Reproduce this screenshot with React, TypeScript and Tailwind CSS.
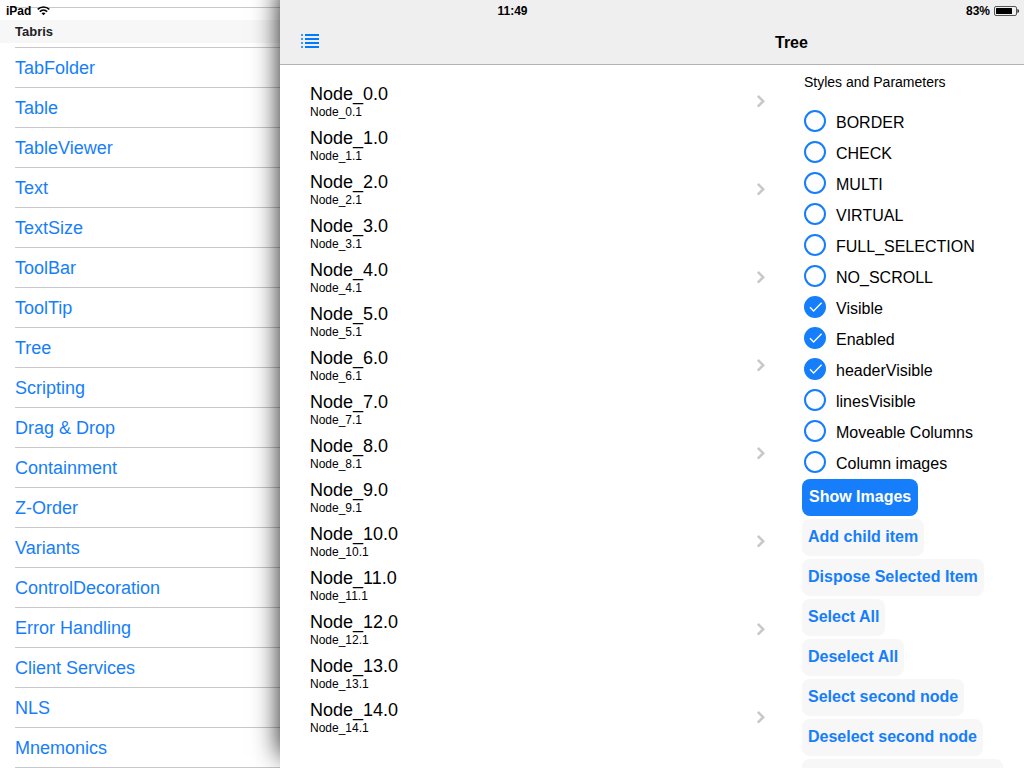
import React, { useState } from 'react';

const pages = [
  'TabFolder', 'Table', 'TableViewer', 'Text', 'TextSize', 'ToolBar', 'ToolTip', 'Tree', 'Scripting',
  'Drag & Drop', 'Containment', 'Z-Order', 'Variants', 'ControlDecoration', 'Error Handling',
  'Client Services', 'NLS', 'Mnemonics',
];

const initialOptions = [
  { label: 'BORDER', on: false },
  { label: 'CHECK', on: false },
  { label: 'MULTI', on: false },
  { label: 'VIRTUAL', on: false },
  { label: 'FULL_SELECTION', on: false },
  { label: 'NO_SCROLL', on: false },
  { label: 'Visible', on: true },
  { label: 'Enabled', on: true },
  { label: 'headerVisible', on: true },
  { label: 'linesVisible', on: false },
  { label: 'Moveable Columns', on: false },
  { label: 'Column images', on: false },
];

const actions = ['Add child item', 'Dispose Selected Item', 'Select All', 'Deselect All', 'Select second node', 'Deselect second node'];

const nodes = Array.from({ length: 15 }, (_, i) => i);

function WifiIcon() {
  return (
    <svg width="13" height="10" viewBox="0 0 13 10" fill="none" stroke="#000" aria-hidden="true">
      <path d="M.7 3.4C3.9.2 9.1.2 12.3 3.4" strokeWidth="1.5" />
      <path d="M2.8 5.6c2.1-2 5.3-2 7.4 0" strokeWidth="1.5" />
      <path d="M6.5 9.3 4.5 7.3c1.1-1.1 2.9-1.1 4 0z" fill="#000" stroke="none" />
    </svg>
  );
}

function BatteryIcon() {
  return (
    <svg width="25" height="10" viewBox="0 0 25 10" aria-hidden="true">
      <rect x=".5" y=".5" width="22" height="9" rx="1.5" fill="none" stroke="#555" />
      <rect x="2" y="2" width="16" height="6" rx=".5" fill="#000" />
      <path d="M23.5 3v4c1-.4 1.3-1.1 1.3-2s-.3-1.6-1.3-2z" fill="#000" />
    </svg>
  );
}

function StatusBar() {
  return (
    <div className="pointer-events-none absolute inset-x-0 top-0 z-20 grid h-[22px] grid-cols-3 items-center pl-1.5 pr-[5px] text-xs font-bold">
      <div className="flex items-center gap-1.5">
        <span>iPad</span>
        <WifiIcon />
      </div>
      <span className="text-center">11:49</span>
      <div className="flex items-center justify-end gap-1">
        <span>83%</span>
        <BatteryIcon />
      </div>
    </div>
  );
}

function Sidebar() {
  return (
    <nav className="flex flex-col overflow-hidden bg-white">
      <div className="h-5 shrink-0 pl-[15px] pt-[7px]">
        <div className="border-t border-[#c8c7cc]" />
      </div>
      <h2 className="h-[23px] shrink-0 bg-[#f7f7f7] pl-[15px] text-[13px] font-bold leading-[23px] text-[#222]">Tabris</h2>
      <ul className="ml-[15px] mt-1">
        {pages.map((page) => (
          <li key={page} className="h-10 border-t border-[#c8c7cc]">
            <a href="#" className="block text-lg leading-10 text-[#167efb]">{page}</a>
          </li>
        ))}
        <li className="border-t border-[#c8c7cc]" />
      </ul>
    </nav>
  );
}

function NodeRow({ index }: { index: number }) {
  return (
    <li className="flex h-11 items-center justify-between">
      <div className="pt-0.5 text-black">
        <div className="text-lg leading-5">{`Node_${index}.0`}</div>
        <div className="text-xs leading-4">{`Node_${index}.1`}</div>
      </div>
      {index % 2 === 0 && (
        <button type="button" aria-label={`Expand Node_${index}.0`}>
          <svg width="10" height="14" viewBox="0 0 10 14" fill="none" stroke="#c7c7cc" strokeWidth="2.5">
            <path d="M1.8 1.8 7.2 7.2 1.8 12.6" />
          </svg>
        </button>
      )}
    </li>
  );
}

function Option({ label, on }: { label: string; on: boolean }) {
  const [checked, setChecked] = useState(on);
  return (
    <label className="flex h-[31px] items-start gap-2.5">
      <span className="grid">
        <input
          type="checkbox"
          checked={checked}
          onChange={(e) => setChecked(e.target.checked)}
          className="col-start-1 row-start-1 size-[22px] appearance-none rounded-full border-2 border-[#167efb] bg-white checked:bg-[#167efb]"
        />
        {checked && (
          <svg className="pointer-events-none col-start-1 row-start-1" width="22" height="22" viewBox="0 0 22 22" fill="none" stroke="#fff" strokeWidth="1.3">
            <path d="m6 11.3 3.6 3.7 8-8.2" />
          </svg>
        )}
      </span>
      <span className="text-base leading-[26px]">{label}</span>
    </label>
  );
}

export default function App() {
  return (
    <div className="relative grid h-screen grid-cols-[280px_minmax(0,1fr)] overflow-hidden bg-white font-['Liberation_Sans',Arial,sans-serif] text-black">
      <StatusBar />
      <Sidebar />
      <main className="z-10 flex min-h-0 flex-col bg-white shadow-[0_-12px_25px_rgba(0,0,0,0.9)]">
        <header className="flex h-[65px] shrink-0 items-center justify-between border-b border-[#b2b2b2] bg-[#efefef] pl-[21px] pt-[18px]">
          <button type="button" aria-label="Show list">
            <svg width="18" height="14" viewBox="0 0 18 14" fill="#007aff">
              <path d="M4 0h14v2H4zM4 4h14v2H4zM4 8h14v2H4zM4 12h14v2H4z" />
              <path d="M0 0h2v2H0zM0 4h2v2H0zM0 8h2v2H0zM0 12h2v2H0z" opacity=".75" />
            </svg>
          </button>
          <h1 className="w-[249px] pt-[3px] text-base font-bold">Tree</h1>
        </header>
        <div className="flex min-h-0 flex-1">
          <ul className="min-w-0 flex-1 pl-[30px] pr-9 pt-[14px]">
            {nodes.map((n) => <NodeRow key={n} index={n} />)}
          </ul>
          <aside className="w-[222px] shrink-0 overflow-hidden">
            <fieldset className="pl-0.5">
              <legend className="h-[45px] pt-[7px] text-sm">Styles and Parameters</legend>
              {initialOptions.map((o) => <Option key={o.label} {...o} />)}
            </fieldset>
            <div className="-mt-[3px] flex flex-col items-start gap-[3px]">
              <button type="button" className="h-[37px] rounded-lg bg-[#167efb] px-[7px] pb-0.5 text-base font-bold text-white">Show Images</button>
              {actions.map((a) => (
                <button key={a} type="button" className="h-[37px] rounded-lg bg-[#f7f7f7] px-1.5 pb-0.5 text-base font-bold text-[#167efb]">{a}</button>
              ))}
              <button type="button" aria-label="More actions" className="h-[37px] w-[201px] rounded-lg bg-[#f7f7f7]" />
            </div>
          </aside>
        </div>
      </main>
    </div>
  );
}
